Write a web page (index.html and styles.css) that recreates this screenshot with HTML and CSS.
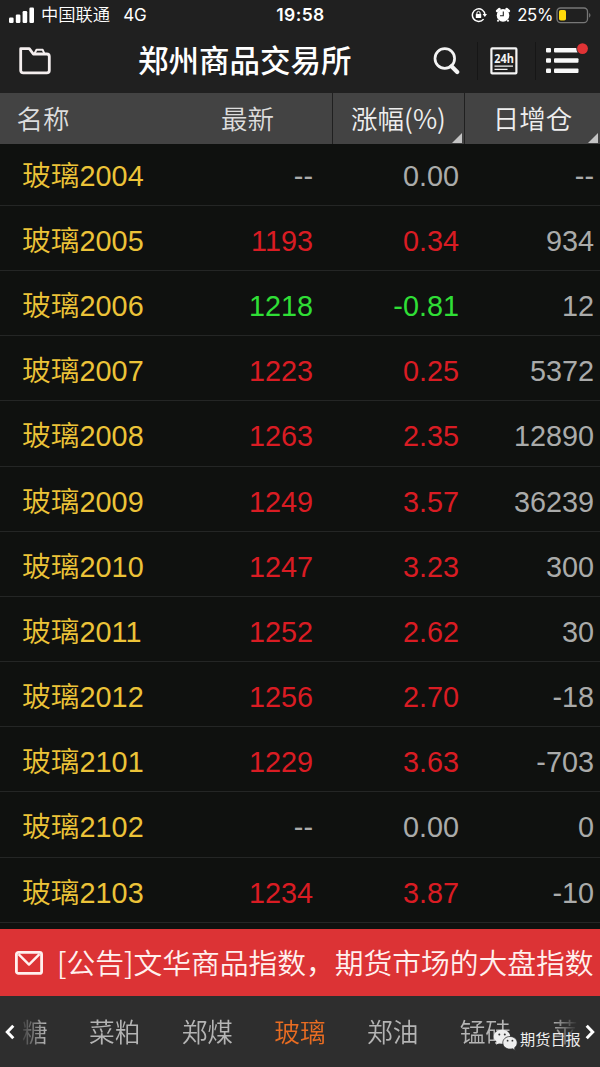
FILE: index.html
```html
<!DOCTYPE html>
<html lang="zh-CN">
<head>
    <meta charset="UTF-8">
    <meta name="viewport" content="width=device-width, initial-scale=1.0">
    <title>郑州商品交易所</title>
    <link rel="stylesheet" href="styles.css">
</head>
<body>
    <div class="app">
        <div class="status-bar">
            <div class="status-left">
                <svg class="signal" width="26" height="16" viewBox="0 0 26 16" fill="#fff">
                    <rect x="0" y="10.5" width="4.6" height="5.5" rx="1.2"/>
                    <rect x="6.8" y="7.5" width="4.6" height="8.5" rx="1.2"/>
                    <rect x="13.6" y="4" width="4.6" height="12" rx="1.2"/>
                    <rect x="20.4" y="0.5" width="4.6" height="15.5" rx="1.2"/>
                </svg>
                <span class="carrier">中国联通</span>
                <span class="network">4G</span>
            </div>
            <span class="time">19:58</span>
            <div class="status-right">
                <svg width="16" height="16" viewBox="0 0 16 16">
                    <path d="M12.6 12.1A6.3 6.3 0 1 1 14 8" fill="none" stroke="#fff" stroke-width="1.5"/>
                    <path d="M11.6 7h4.4l-2.2 3z" fill="#fff"/>
                    <rect x="4.8" y="7" width="5.4" height="4" rx=".5" fill="#fff"/>
                    <path d="M5.9 7.2V6a1.6 1.6 0 0 1 3.2 0v1.2" fill="none" stroke="#fff" stroke-width="1"/>
                </svg>
                <svg class="alarm" width="16" height="16" viewBox="0 0 16 16">
                    <circle cx="8" cy="8.4" r="6.3" fill="#fff"/>
                    <path d="M2.2 4L4.4 2.1M13.8 4L11.600 2.100" fill="none" stroke="#fff" stroke-width="2.6" stroke-linecap="round"/>
                    <path d="M3.500 13l-1 1.500M12.500 13l1 1.500" stroke="#fff" stroke-width="1.8"/>
                    <path d="M8.3 4.6v4.2H5" fill="none" stroke="#202020" stroke-width="1.1"/>
                </svg>
                <span class="percent">25%</span>
                <svg width="36" height="17" viewBox="0 0 36 17">
                    <rect x="1" y="1" width="30.5" height="14.6" rx="3.5" fill="none" stroke="#777" stroke-width="1.3"/>
                    <rect x="3" y="3" width="7" height="10.6" rx="1.8" fill="#ffd90a"/>
                    <path d="M33.3 5.8q2.2 2.5 0 5z" fill="#8a8a8a"/>
                </svg>
            </div>
        </div>

        <div class="nav-bar">
            <svg class="folder" width="32" height="28" viewBox="0 0 32 28" fill="none" stroke="#f4eeee" stroke-width="2.8" stroke-linejoin="round">
                <path d="M1.7 1.7h8.6l4 5.3h13.4q2.6 0 2.6 2.5v14q0 2.4-2.6 2.4H4.3q-2.6 0-2.6-2.4z"/>
                <path d="M15.5 6.5l2-3.7h6.2l1.8 4" stroke-width="2"/>
            </svg>
            <h1 class="title">郑州商品交易所</h1>
            <div class="actions">
                <div class="action search">
                    <svg width="27" height="28" viewBox="0 0 27 28" fill="none" stroke="#f4f4f4">
                        <circle cx="11.8" cy="11.5" r="9.8" stroke-width="2.7"/>
                        <path d="M18.5 19.2l5.7 5.8" stroke-width="4.2" stroke-linecap="round"/>
                    </svg>
                </div>
                <div class="action news">
                    <svg width="28" height="28" viewBox="0 0 28 28">
                        <rect x="1.4" y="1.4" width="25" height="25" rx=".8" fill="none" stroke="#f4f4f4" stroke-width="2.2"/>
                        <text x="14" y="15.6" text-anchor="middle" textLength="19.6" lengthAdjust="spacingAndGlyphs">24h</text>
                        <path d="M4.5 19.2h18.5M4.5 22.4h13" stroke="#f4f4f4" stroke-width="1.3"/>
                    </svg>
                </div>
                <div class="action menu">
                    <svg width="42" height="36" viewBox="0 0 42 36" fill="#f8f8f8">
                        <rect x="0" y="5" width="5" height="4.6" rx="1"/>
                        <rect x="8" y="5" width="24" height="4.6" rx="1"/>
                        <rect x="0" y="15.2" width="5" height="4.6" rx="1"/>
                        <rect x="8" y="15.2" width="24.5" height="4.6" rx="1"/>
                        <rect x="0" y="25.4" width="5" height="4.6" rx="1"/>
                        <rect x="8" y="25.4" width="24.5" height="4.6" rx="1"/>
                        <circle cx="36.5" cy="5.6" r="6.2" fill="#202020"/>
                        <circle cx="36.5" cy="5.6" r="5.4" fill="#e03335"/>
                    </svg>
                </div>
            </div>
        </div>

        <div class="table-head">
            <span class="head-cell name">名称</span>
            <span class="head-cell latest">最新</span>
            <span class="head-cell change sortable">涨幅(%)</span>
            <span class="head-cell position sortable">日增仓</span>
        </div>

        <div class="quotes">
            <div class="row"><span class="name">玻璃2004</span><span>--</span><span>0.00</span><span>--</span></div>
            <div class="row up"><span class="name">玻璃2005</span><span class="price">1193</span><span class="price">0.34</span><span>934</span></div>
            <div class="row down"><span class="name">玻璃2006</span><span class="price">1218</span><span class="price">-0.81</span><span>12</span></div>
            <div class="row up"><span class="name">玻璃2007</span><span class="price">1223</span><span class="price">0.25</span><span>5372</span></div>
            <div class="row up"><span class="name">玻璃2008</span><span class="price">1263</span><span class="price">2.35</span><span>12890</span></div>
            <div class="row up"><span class="name">玻璃2009</span><span class="price">1249</span><span class="price">3.57</span><span>36239</span></div>
            <div class="row up"><span class="name">玻璃2010</span><span class="price">1247</span><span class="price">3.23</span><span>300</span></div>
            <div class="row up"><span class="name">玻璃2011</span><span class="price">1252</span><span class="price">2.62</span><span>30</span></div>
            <div class="row up"><span class="name">玻璃2012</span><span class="price">1256</span><span class="price">2.70</span><span>-18</span></div>
            <div class="row up"><span class="name">玻璃2101</span><span class="price">1229</span><span class="price">3.63</span><span>-703</span></div>
            <div class="row"><span class="name">玻璃2102</span><span>--</span><span>0.00</span><span>0</span></div>
            <div class="row up"><span class="name">玻璃2103</span><span class="price">1234</span><span class="price">3.87</span><span>-10</span></div>
        </div>

        <div class="notice">
            <svg width="28" height="24" viewBox="0 0 28 24" fill="none" stroke="#fff0ee" stroke-width="2.8" stroke-linejoin="round">
                <rect x="1.4" y="1.4" width="25.2" height="21" rx="2"/>
                <path d="M3.5 3.2L14 13.6 24.5 3.2" stroke-width="2.4"/>
            </svg>
            <span class="notice-text">[公告]文华商品指数，期货市场的大盘指数</span>
        </div>

        <div class="tab-bar">
            <svg class="arrow" width="10" height="16" viewBox="0 0 10 16"><path d="M8.3 1.8L2.3 8l6 6.2"/></svg>
            <div class="tabs">
                <span class="tab">糖</span>
                <span class="tab">菜粕</span>
                <span class="tab">郑煤</span>
                <span class="tab active">玻璃</span>
                <span class="tab">郑油</span>
                <span class="tab">锰硅</span>
                <span class="tab">苹</span>
            </div>
            <svg class="arrow" width="10" height="16" viewBox="0 0 10 16"><path d="M1.7 1.8L7.7 8l-6 6.2"/></svg>
            <div class="watermark">
                <svg width="25" height="22" viewBox="0 0 25 22">
                    <path d="M9 .7C4.300 .7.8 3.700.8 7.600c0 2.200 1.100 4 2.900 5.300L3 15.700l3.100-1.600c1 .3 1.900.4 2.900.4 4.700 0 8.200-3 8.200-6.900S13.700.7 9 .7z" fill="#eee"/>
                    <path d="M17 7.500c-4.100 0-7.200 2.800-7.200 6.300s3.100 6.300 7.200 6.300c.9 0 1.700-.1 2.500-.4l2.700 1.500-.6-2.500c1.600-1.200 2.600-2.900 2.600-4.900 0-3.500-3.100-6.300-7.200-6.300z" fill="#eee" stroke="#2e2e2e" stroke-width=".8"/>
                    <g fill="#333">
                        <circle cx="6.300" cy="5.400" r="1"/>
                        <circle cx="11.800" cy="5.400" r="1"/>
                        <circle cx="14.600" cy="11.700" r=".9"/>
                        <circle cx="19.400" cy="11.700" r=".9"/>
                    </g>
                </svg>
                <span>期货日报</span>
            </div>
        </div>
    </div>
</body>
</html>
```
FILE: styles.css
```css
:root {
    --bar: #202020;
    --head: #434343;
    --background: #0f110f;
    --line: #242625;
    --yellow: #ecc338;
    --red: #d91c23;
    --green: #2fdf36;
    --gray: #aaabaa;
}

* {
    box-sizing: border-box;
    margin: 0;
    padding: 0;
}

body {
    font-family: "Liberation Sans", "Noto Sans CJK SC", sans-serif;
    background: var(--background);
    color: white;
}

svg {
    display: block;
    flex-shrink: 0;
}

.app {
    width: 600px;
    height: 1067px;
    display: flex;
    flex-direction: column;
    overflow: hidden;
}

.status-bar {
    height: 30px;
    flex-shrink: 0;
    display: grid;
    grid-template-columns: 1fr auto 1fr;
    align-items: center;
    padding: 0 8px 0 9px;
    background: var(--bar);
    font-family: Inter, "Noto Sans CJK SC", sans-serif;
    font-size: 17px;
    line-height: 30px;
}

.status-left,
.status-right {
    display: flex;
    align-items: center;
}

.status-right {
    justify-content: flex-end;
}

.carrier {
    margin-left: 6px;
    font-size: 17.3px;
    font-weight: 350;
}

.network {
    margin-left: 13px;
    font-size: 17px;
}

.time {
    font-size: 17.5px;
    font-weight: 600;
    letter-spacing: 0.4px;
}

.alarm {
    margin-left: 8px;
}

.percent {
    margin: 0 3px 0 6px;
    font-size: 16.8px;
    letter-spacing: -0.4px;
}

.nav-bar {
    height: 63px;
    flex-shrink: 0;
    display: grid;
    grid-template-columns: 119px auto 1fr;
    align-items: center;
    padding: 0 11px 1px 19px;
    background: var(--bar);
}

.title {
    font-size: 30.5px;
    font-weight: 500;
    line-height: 40px;
}

.actions {
    display: flex;
    justify-content: flex-end;
    align-items: center;
    padding-bottom: 1px;
}

.action {
    height: 38px;
    display: flex;
    align-items: center;
}

.news {
    margin-left: 17px;
    padding: 0 17px 0 12px;
    border-left: 1px solid #161616;
}

.news text {
    fill: #f4f4f4;
    font-family: "Open Sans", sans-serif;
    font-size: 12px;
    font-weight: 700;
}

.menu {
    padding-left: 10px;
    border-left: 1px solid #161616;
}

.menu svg {
    margin-right: 1px;
}

.table-head {
    position: relative;
    z-index: 1;
    height: 51px;
    flex-shrink: 0;
    display: grid;
    grid-template-columns: 166px 166px 132px 136px;
    background: var(--head);
    color: #ddd;
    font-family: "Noto Sans CJK SC", sans-serif;
    font-size: 26.5px;
    font-weight: 350;
    line-height: 49px;
}

.head-cell.name {
    padding-left: 16.5px;
}

.head-cell.latest {
    padding-left: 55px;
}

.sortable {
    position: relative;
    border-left: 1px solid #202020;
    text-align: center;
    color: #eee;
}

/* sort marker in the lower right corner */
.sortable::after {
    content: "";
    position: absolute;
    right: 2px;
    bottom: 1px;
    border-left: 10px solid transparent;
    border-bottom: 10px solid #c4c4c4;
}

/* list is scrolled a little under the header */
.quotes {
    height: 785px;
    flex-shrink: 0;
    margin-top: -3.4px;
    margin-bottom: 3.4px;
}

.row {
    height: 65.2px;
    display: grid;
    grid-template-columns: 166px 147px 146px 135px;
    padding-top: 6px;
    border-bottom: 1px solid var(--line);
    color: var(--gray);
    font-size: 28.8px;
    line-height: 58px;
    text-align: right;
}

.row .name {
    padding-left: 22px;
    color: var(--yellow);
    text-align: left;
    font-weight: 350;
}

.up .price {
    color: var(--red);
}

.down .price {
    color: var(--green);
}

.notice {
    height: 67px;
    flex-shrink: 0;
    display: flex;
    align-items: center;
    gap: 14px;
    padding-left: 15px;
    background: #dc3335;
    color: #fff0ee;
    font-family: "Noto Sans CJK SC", sans-serif;
    font-size: 28.8px;
    font-weight: 350;
    line-height: 64px;
    white-space: nowrap;
}

.notice-text {
    padding-bottom: 2px;
    letter-spacing: -0.05px;
}

.tab-bar {
    position: relative;
    height: 71px;
    flex-shrink: 0;
    display: flex;
    align-items: center;
    justify-content: space-between;
    padding: 0 5px;
    background: #2e2e2e;
}

.arrow {
    fill: none;
    stroke: #fff;
    stroke-width: 3;
}

.tabs {
    width: 556px;
    display: flex;
    gap: 41.3px;
    overflow: hidden;
    padding-bottom: 3px;
    color: #b4b4b4;
    font-size: 25.7px;
    font-weight: 350;
    white-space: nowrap;
    -webkit-mask-image: linear-gradient(90deg, rgba(0, 0, 0, 0.15), #000 24px, #000 530px, transparent);
    mask-image: linear-gradient(90deg, rgba(0, 0, 0, 0.15), #000 24px, #000 530px, transparent);
}

.tab.active {
    color: #e86c22;
}

.watermark {
    position: absolute;
    left: 493px;
    top: 33px;
    display: flex;
    align-items: center;
    gap: 2px;
    color: #eee;
    font-size: 15.2px;
    line-height: 22px;
}
```
